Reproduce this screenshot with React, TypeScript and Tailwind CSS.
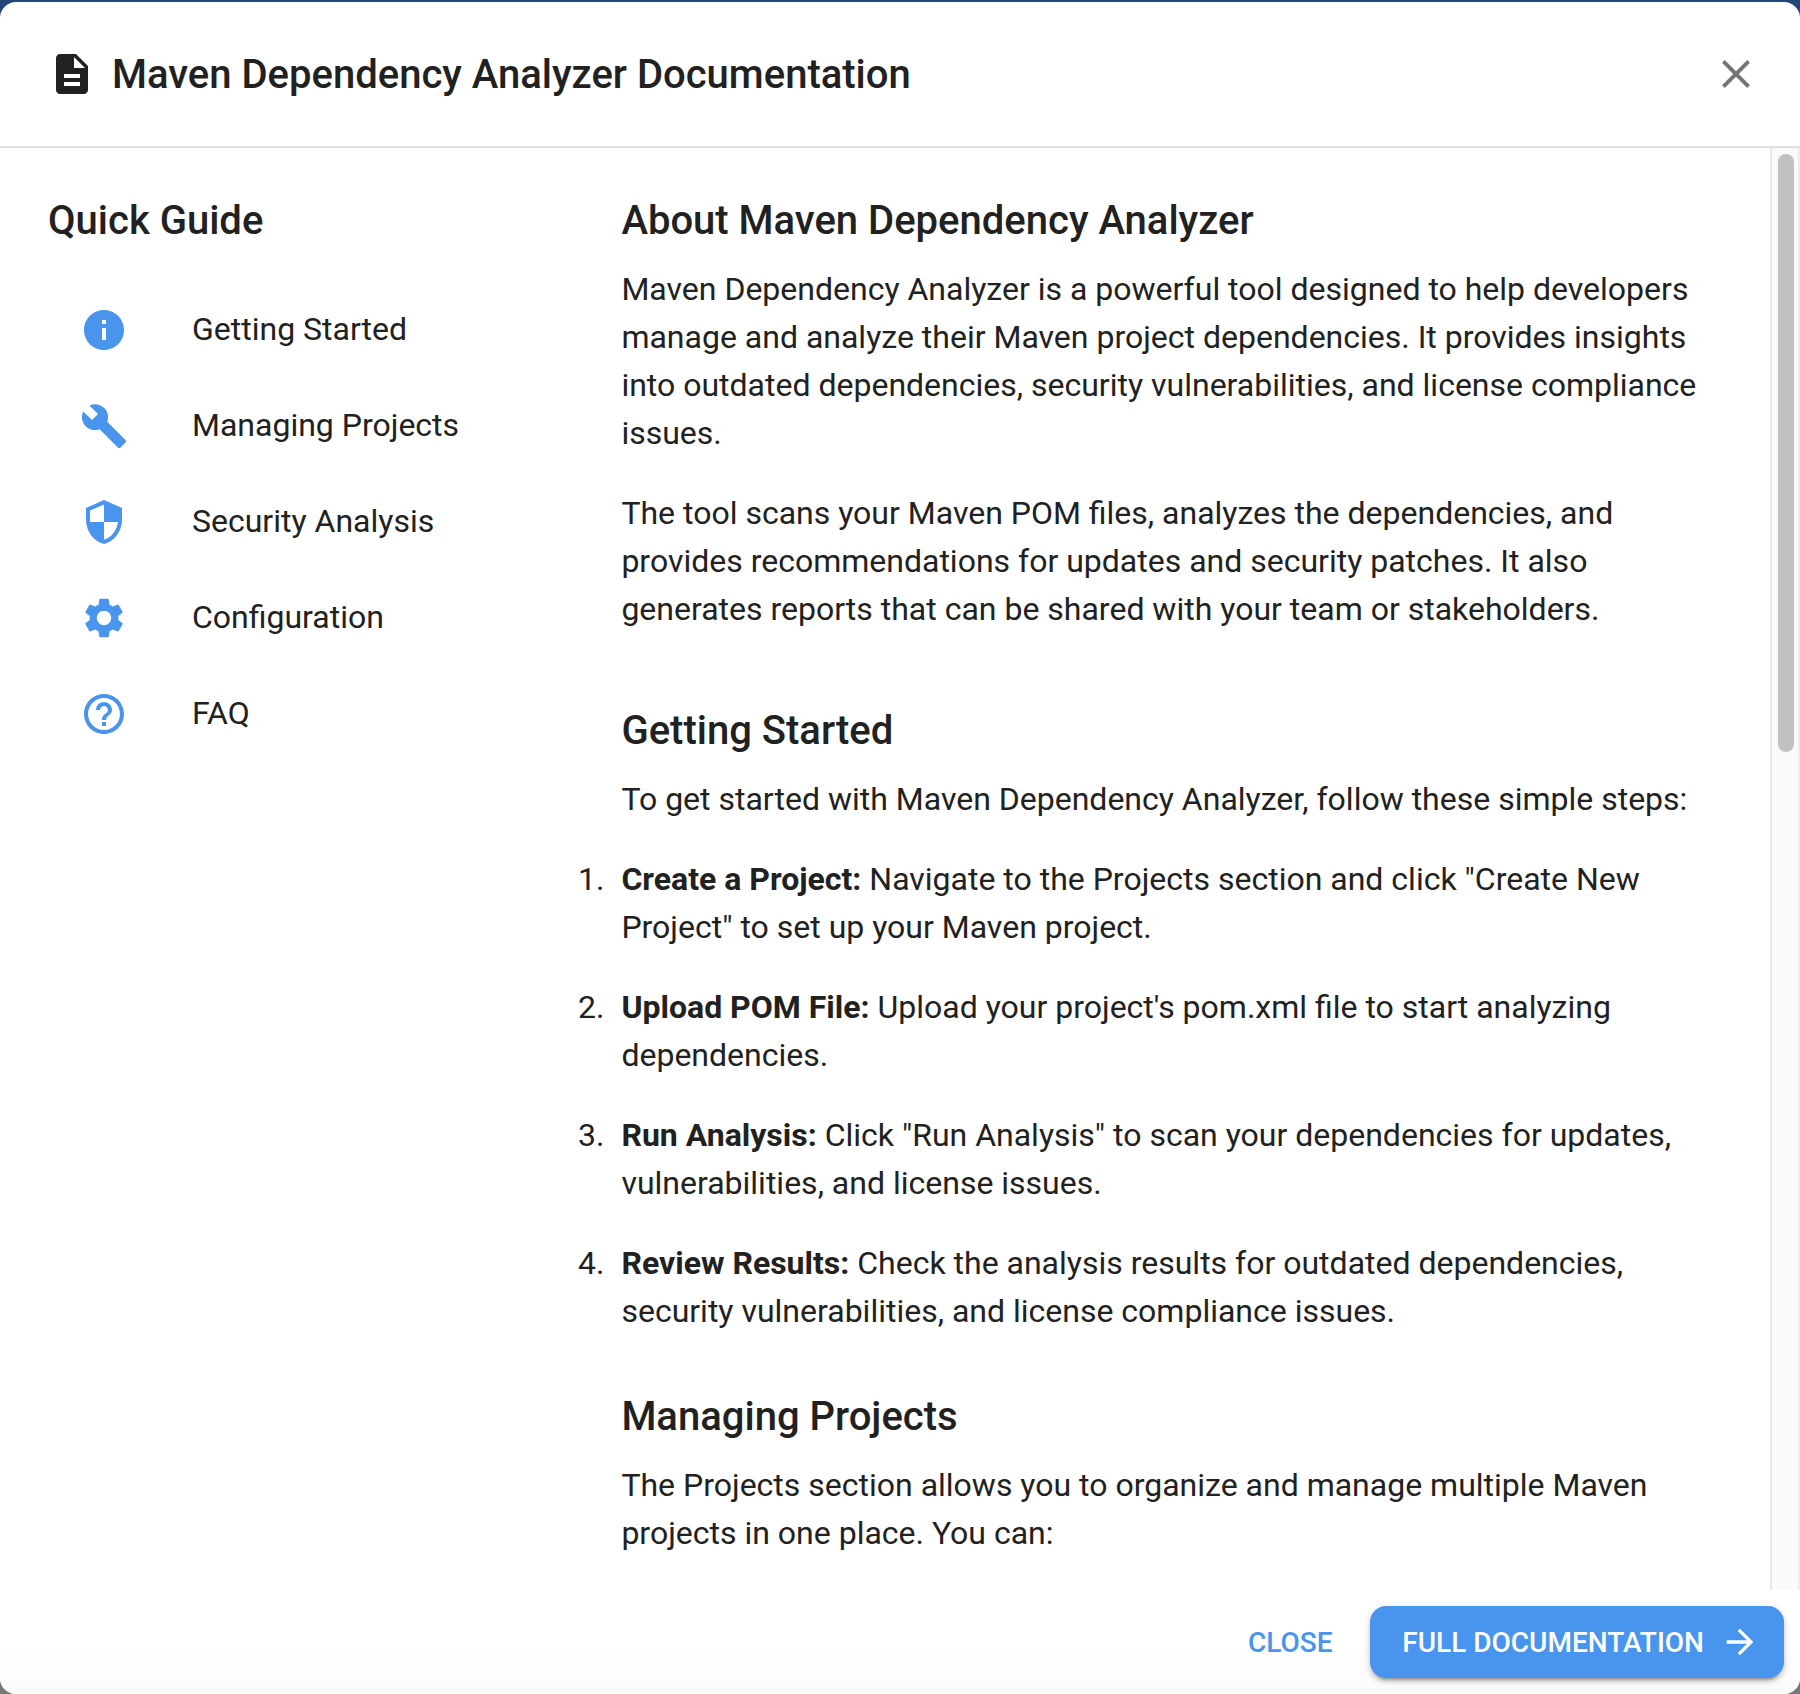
import type { ReactNode } from "react";
import type { IconType } from "react-icons";
import {
  MdArrowForward,
  MdBuild,
  MdClose,
  MdDescription,
  MdHelpOutline,
  MdInfo,
  MdSecurity,
  MdSettings,
} from "react-icons/md";

const guideItems: { label: string; Icon: IconType }[] = [
  { label: "Getting Started", Icon: MdInfo },
  { label: "Managing Projects", Icon: MdBuild },
  { label: "Security Analysis", Icon: MdSecurity },
  { label: "Configuration", Icon: MdSettings },
  { label: "FAQ", Icon: MdHelpOutline },
];

const steps = [
  {
    title: "Create a Project:",
    text: 'Navigate to the Projects section and click "Create New Project" to set up your Maven project.',
  },
  {
    title: "Upload POM File:",
    text: "Upload your project's pom.xml file to start analyzing dependencies.",
  },
  {
    title: "Run Analysis:",
    text: 'Click "Run Analysis" to scan your dependencies for updates, vulnerabilities, and license issues.',
  },
  {
    title: "Review Results:",
    text: "Check the analysis results for outdated dependencies, security vulnerabilities, and license compliance issues.",
  },
];

function Heading({ children }: { children: ReactNode }) {
  return <h2 className="mb-3 pt-px text-[40px] leading-[64px] font-medium">{children}</h2>;
}

function Paragraph({ children }: { children: ReactNode }) {
  return <p className="mb-8">{children}</p>;
}

export default function App() {
  return (
    <div className="h-[1694px] w-[1800px] overflow-hidden bg-linear-to-b from-[#24477a] from-50% to-[#777777] to-50% pt-0.5 font-['Roboto',sans-serif] text-[#212121]">
      <div className="flex h-[1692px] flex-col overflow-hidden rounded-2xl bg-white">
        <header className="flex h-36 shrink-0 items-center justify-between pr-6 pl-12">
          <div className="flex items-center gap-4">
            <MdDescription className="size-12" />
            <h1 className="pt-0.5 text-[40px] leading-[64px] font-medium">
              Maven Dependency Analyzer Documentation
            </h1>
          </div>
          <button className="flex size-20 items-center justify-center text-[#757575]">
            <MdClose className="size-12" />
          </button>
        </header>

        <div className="flex min-h-0 flex-1 border-t-2 border-[#e0e0e0]">
          <div className="flex min-w-0 flex-1 overflow-hidden px-12 pt-10 text-[32px] leading-[48px]">
            <nav className="w-[525.4px] shrink-0">
              <Heading>Quick Guide</Heading>
              <ul className="pt-[17px]">
                {guideItems.map(({ label, Icon }) => (
                  <li key={label} className="flex h-24 items-center pl-8">
                    <Icon className="mr-16 size-12 text-[#4994ec]" />
                    <span className="pb-0.5">{label}</span>
                  </li>
                ))}
              </ul>
            </nav>
            <main className="ml-12 min-w-0 flex-1 pr-4">
              <Heading>About Maven Dependency Analyzer</Heading>
              <Paragraph>
                Maven Dependency Analyzer is a powerful tool designed to help developers manage and
                analyze their Maven project dependencies. It provides insights into outdated
                dependencies, security vulnerabilities, and license compliance issues.
              </Paragraph>
              <Paragraph>
                The tool scans your Maven POM files, analyzes the dependencies, and provides
                recommendations for updates and security patches. It also generates reports that can
                be shared with your team or stakeholders.
              </Paragraph>
              <section className="pt-[33px]">
                <Heading>Getting Started</Heading>
                <Paragraph>
                  To get started with Maven Dependency Analyzer, follow these simple steps:
                </Paragraph>
                <ol className="-ml-12 flex flex-col gap-8">
                  {steps.map((step, index) => (
                    <li key={step.title} className="grid grid-cols-[48px_1fr]">
                      <span className="pr-[17px] text-right">{index + 1}.</span>
                      <p>
                        <strong className="font-bold">{step.title}</strong> {step.text}
                      </p>
                    </li>
                  ))}
                </ol>
              </section>
              <section className="pt-[49px]">
                <Heading>Managing Projects</Heading>
                <Paragraph>
                  The Projects section allows you to organize and manage multiple Maven projects in
                  one place. You can:
                </Paragraph>
              </section>
            </main>
          </div>
          <div className="w-[30px] shrink-0 border-r-2 border-l-2 border-r-[#ededed] border-l-[#e8e8e8] bg-[#fafafa] pt-1.5 pr-1 pl-1.5">
            <div className="h-[598px] rounded-full bg-[#c1c1c1]" />
          </div>
        </div>

        <footer className="flex h-[104px] shrink-0 items-center justify-end gap-4 bg-linear-to-b from-white from-50% to-[#fbfbfb] px-4 text-[28px] leading-[48px] font-medium">
          <button className="flex h-[72px] w-32 items-center justify-center text-[#4994ec]">
            <span className="pt-0.5">CLOSE</span>
          </button>
          <button className="flex h-[72px] items-center rounded-2xl bg-[#4994ec] pr-6 pl-8 text-white shadow-[0_6px_2px_-4px_rgba(0,0,0,0.2),0_4px_4px_0_rgba(0,0,0,0.14),0_2px_10px_0_rgba(0,0,0,0.12)]">
            <span className="pt-0.5">FULL DOCUMENTATION</span>
            <MdArrowForward className="ml-4 size-10" />
          </button>
        </footer>
      </div>
    </div>
  );
}
